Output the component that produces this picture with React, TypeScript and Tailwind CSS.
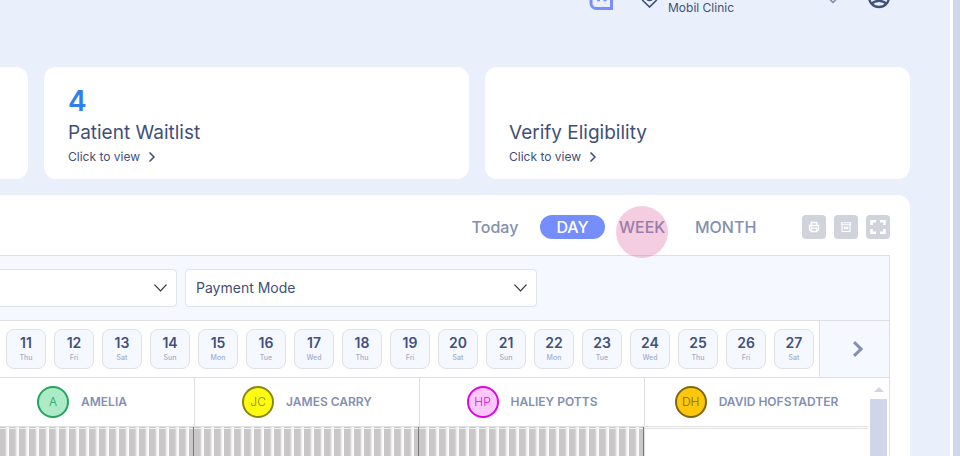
import { ChevronDown, ChevronRight } from "lucide-react";

const days = ["Thu", "Fri", "Sat", "Sun", "Mon", "Tue", "Wed"];

const dates = Array.from({ length: 17 }, (_, i) => ({
  day: 11 + i,
  name: days[i % 7],
}));

const staff = [
  { initials: "A", name: "AMELIA", colors: "border-[#27a35b] bg-[#abebc6] text-[#27a35b]", busy: true },
  { initials: "JC", name: "JAMES CARRY", colors: "border-[#8a8712] bg-[#fdfb12] text-[#8a8712]", busy: true },
  { initials: "HP", name: "HALIEY POTTS", colors: "border-[#e400e4] bg-[#fcc8fc] text-[#e400e4]", busy: true },
  { initials: "DH", name: "DAVID HOFSTADTER", colors: "border-[#806612] bg-[#fdc70c] text-[#806612]", busy: false },
];

function Header() {
  return (
    <header className="flex h-[67px] items-start justify-end pr-[19px] text-[#3f5079]">
      <svg
        className="-mt-4 h-7 w-7"
        viewBox="0 0 28 28"
        fill="none"
        stroke="#7b8ffb"
        strokeWidth="3"
        aria-hidden="true"
      >
        <path d="M23.500 2H9a5 5 0 0 0-5 5v12a5.500 5.500 0 0 0 5.500 5.500h15V7" />
        <path d="M10 16.500h3M16.500 16.500h3" strokeWidth="1.500" />
      </svg>
      <svg
        className="-mt-4 ml-[25px] h-6 w-5"
        viewBox="0 0 20 24"
        fill="none"
        stroke="currentColor"
        strokeWidth="1.700"
        aria-hidden="true"
      >
        <path d="M9.500 23 3.300 17a8 8 0 1 1 12.400 0Z" />
        <circle cx="9.500" cy="13" r="3.500" />
      </svg>
      <span className="ml-2 w-[155px] text-xs leading-4">Mobil Clinic</span>
      <ChevronDown className="-mt-2.5 size-5 text-[#8390b3]" aria-hidden="true" />
      <button className="-mt-[15px] ml-6" aria-label="Account">
        <svg className="size-6" viewBox="0 0 24 24" fill="none" stroke="currentColor" strokeWidth="2.300">
          <circle cx="12" cy="12" r="10" />
          <circle cx="12" cy="9" r="3.500" />
          <path d="M4.500 18.800c2-2 4.700-2.900 7.500-2.900s5.500.9 7.500 2.900" />
        </svg>
      </button>
    </header>
  );
}

function SummaryCard({ count, title }: { count?: number; title: string }) {
  return (
    <section className="h-28 rounded-xl bg-white px-6 pt-4 text-[#3f5079]">
      <p className="h-9 text-[28px] leading-9 font-semibold text-[#2f80ed]">{count}</p>
      <h2 className="text-[19px] leading-7">{title}</h2>
      <a href="#" className="flex items-center gap-1 text-xs leading-5">
        Click to view
        <ChevronRight className="size-4" strokeWidth={2.5} />
      </a>
    </section>
  );
}

function Toolbar() {
  return (
    <div className="flex h-[60px] items-center justify-end pt-1 pr-5 text-[#8390b3]">
      <div className="flex items-center text-base font-medium">
        <button className="mr-5 w-[50px]">Today</button>
        <button className="h-6 w-[65px] rounded-full bg-[#768dfd] leading-6 text-white">DAY</button>
        <button className="relative ml-[14px] w-[46px]">
          WEEK
          <span className="pointer-events-none absolute -top-[9px] left-1/2 size-[52px] -translate-x-1/2 rounded-full bg-[#d9478f]/27" />
        </button>
        <button className="ml-[30px] w-[60px]">MONTH</button>
      </div>
      <div className="ml-[47px] flex gap-2">
        <button className="grid size-6 place-items-center rounded bg-[#d0d3dc] text-white" aria-label="Print">
          <svg className="size-3" viewBox="0 0 12 12" fill="none" stroke="currentColor" strokeWidth="1.300">
            <path d="M3.200 3.800V1.500h5.600v2.300M3 9H1.500V4.500h9V9H9M3.200 7.200h5.600v3.300H3.200zM2.800 6h.8" />
          </svg>
        </button>
        <button className="grid size-6 place-items-center rounded bg-[#d0d3dc] text-white" aria-label="Archive">
          <svg className="size-3" viewBox="0 0 12 12" fill="none" stroke="currentColor" strokeWidth="1.100">
            <path d="M1.500 1.700h9v2h-9zM2 3.900v6.600h8V3.900M4.300 6.200h3.400v1.600H4.300z" />
          </svg>
        </button>
        <button className="grid size-6 place-items-center rounded bg-[#d0d3dc] text-white" aria-label="Full screen">
          <svg className="size-4" viewBox="0 0 16 16" fill="none" stroke="currentColor" strokeWidth="2.600">
            <path d="M1.500 6V2.300H6M10 2.300h4.500V6M14.500 10v3.700H10M6 13.700H1.500V10" />
          </svg>
        </button>
      </div>
    </div>
  );
}

function Filter({ label, options, className }: { label: string; options: string[]; className: string }) {
  return (
    <div className={`relative shrink-0 ${className}`}>
      <select
        aria-label={label}
        className="h-[38px] w-full appearance-none rounded border border-[#dfe3ec] bg-white px-[10px] text-sm text-[#3f5079]"
      >
        {options.map((option) => (
          <option key={option}>{option}</option>
        ))}
      </select>
      <svg
        className="pointer-events-none absolute top-[15px] right-[10px] h-2 w-[13px]"
        viewBox="0 0 13 8"
        fill="none"
        stroke="#333"
        strokeWidth="1.200"
        aria-hidden="true"
      >
        <path d="m.5.7 6 6.300 6-6.300" />
      </svg>
    </div>
  );
}

function DateStrip() {
  return (
    <div className="flex h-[57px] border-b border-[#dfdfe2]">
      <div className="flex flex-1 gap-2 overflow-hidden pt-2 pl-[6px]">
        {dates.map((date) => (
          <button
            key={date.day}
            className="flex h-10 w-10 shrink-0 flex-col items-center rounded-lg border border-[#dfe1e7] bg-[#f5f8ff] pt-1"
          >
            <span className="text-sm leading-[18px] font-semibold text-[#3f5079]">{date.day}</span>
            <span className="text-[7px] leading-3 font-medium text-[#a5aec8]">{date.name}</span>
          </button>
        ))}
      </div>
      <button
        className="grid w-[70px] shrink-0 place-items-center border-l border-[#dfdfe2] bg-[#f5f8ff] pl-[6px] text-[#8390b3]"
        aria-label="Next dates"
      >
        <svg className="h-4 w-[10px]" viewBox="0 0 10 16" fill="none" stroke="currentColor" strokeWidth="3">
          <path d="m1 1.200 7 6.800-7 6.800" />
        </svg>
      </button>
    </div>
  );
}

function Schedule() {
  return (
    <div className="flex">
      {/* first column is scrolled partly out of view */}
      <div className="-ml-[30px] grid flex-1 grid-cols-[225px_225px_225px_1fr]">
        {staff.map((person) => (
          <div key={person.name} className="border-r border-[#dfdfe2] last:border-r-0">
            <div className="flex h-[49px] items-center justify-center border-b border-[#dfdfe2]">
              <span
                className={`grid size-8 shrink-0 place-items-center rounded-full border-2 text-xs font-light ${person.colors}`}
              >
                {person.initials}
              </span>
              <span className="ml-3 text-xs font-semibold whitespace-nowrap text-[#8390b3]">{person.name}</span>
            </div>
            {person.busy ? (
              <div className="-ml-px h-[29px] border-r border-[#777] bg-[repeating-linear-gradient(90deg,#c9c7c8_0_6px,#e6e5e6_7px,#fff_9px_10px)] pt-px">
                <div className="h-px bg-[#f0f0f0]" />
              </div>
            ) : (
              <div className="mt-px h-7 border-t border-[#dfdfe2]" />
            )}
          </div>
        ))}
      </div>
      <div className="mx-[2px] flex w-[17px] flex-col items-center" aria-hidden="true">
        <div className="mt-[9px] h-0 w-0 border-x-[5px] border-b-[5px] border-x-transparent border-b-[#cfd6ea]" />
        <div className="mt-[7px] w-full flex-1 bg-[#cfd6ea]" />
      </div>
    </div>
  );
}

export default function App() {
  return (
    <div className="flex h-screen overflow-hidden bg-[#e9f0fb] font-['Inter','Liberation_Sans',sans-serif]">
      <main className="min-w-0 flex-1 overflow-hidden pr-10">
        <Header />
        <div className="grid grid-cols-[28px_1fr_1fr] gap-4">
          <div className="rounded-r-xl bg-white" />
          <SummaryCard count={4} title="Patient Waitlist" />
          <SummaryCard title="Verify Eligibility" />
        </div>
        <section className="mt-4 rounded-tr-xl bg-white">
          <Toolbar />
          <div className="mr-5 border-t border-r border-[#dfdfe2]">
            <div className="flex gap-2 border-b border-[#dfdfe2] bg-[#f5f8ff] py-[13px]">
              <Filter label="Status" options={[""]} className="-ml-[175px] w-[352px]" />
              <Filter label="Payment mode" options={["Payment Mode", "Cash", "Card"]} className="w-[352px]" />
            </div>
            <DateStrip />
            <Schedule />
          </div>
        </section>
      </main>
      <div className="w-[10px] border-l-[3px] border-white bg-[#cfd6ea]" aria-hidden="true" />
    </div>
  );
}
